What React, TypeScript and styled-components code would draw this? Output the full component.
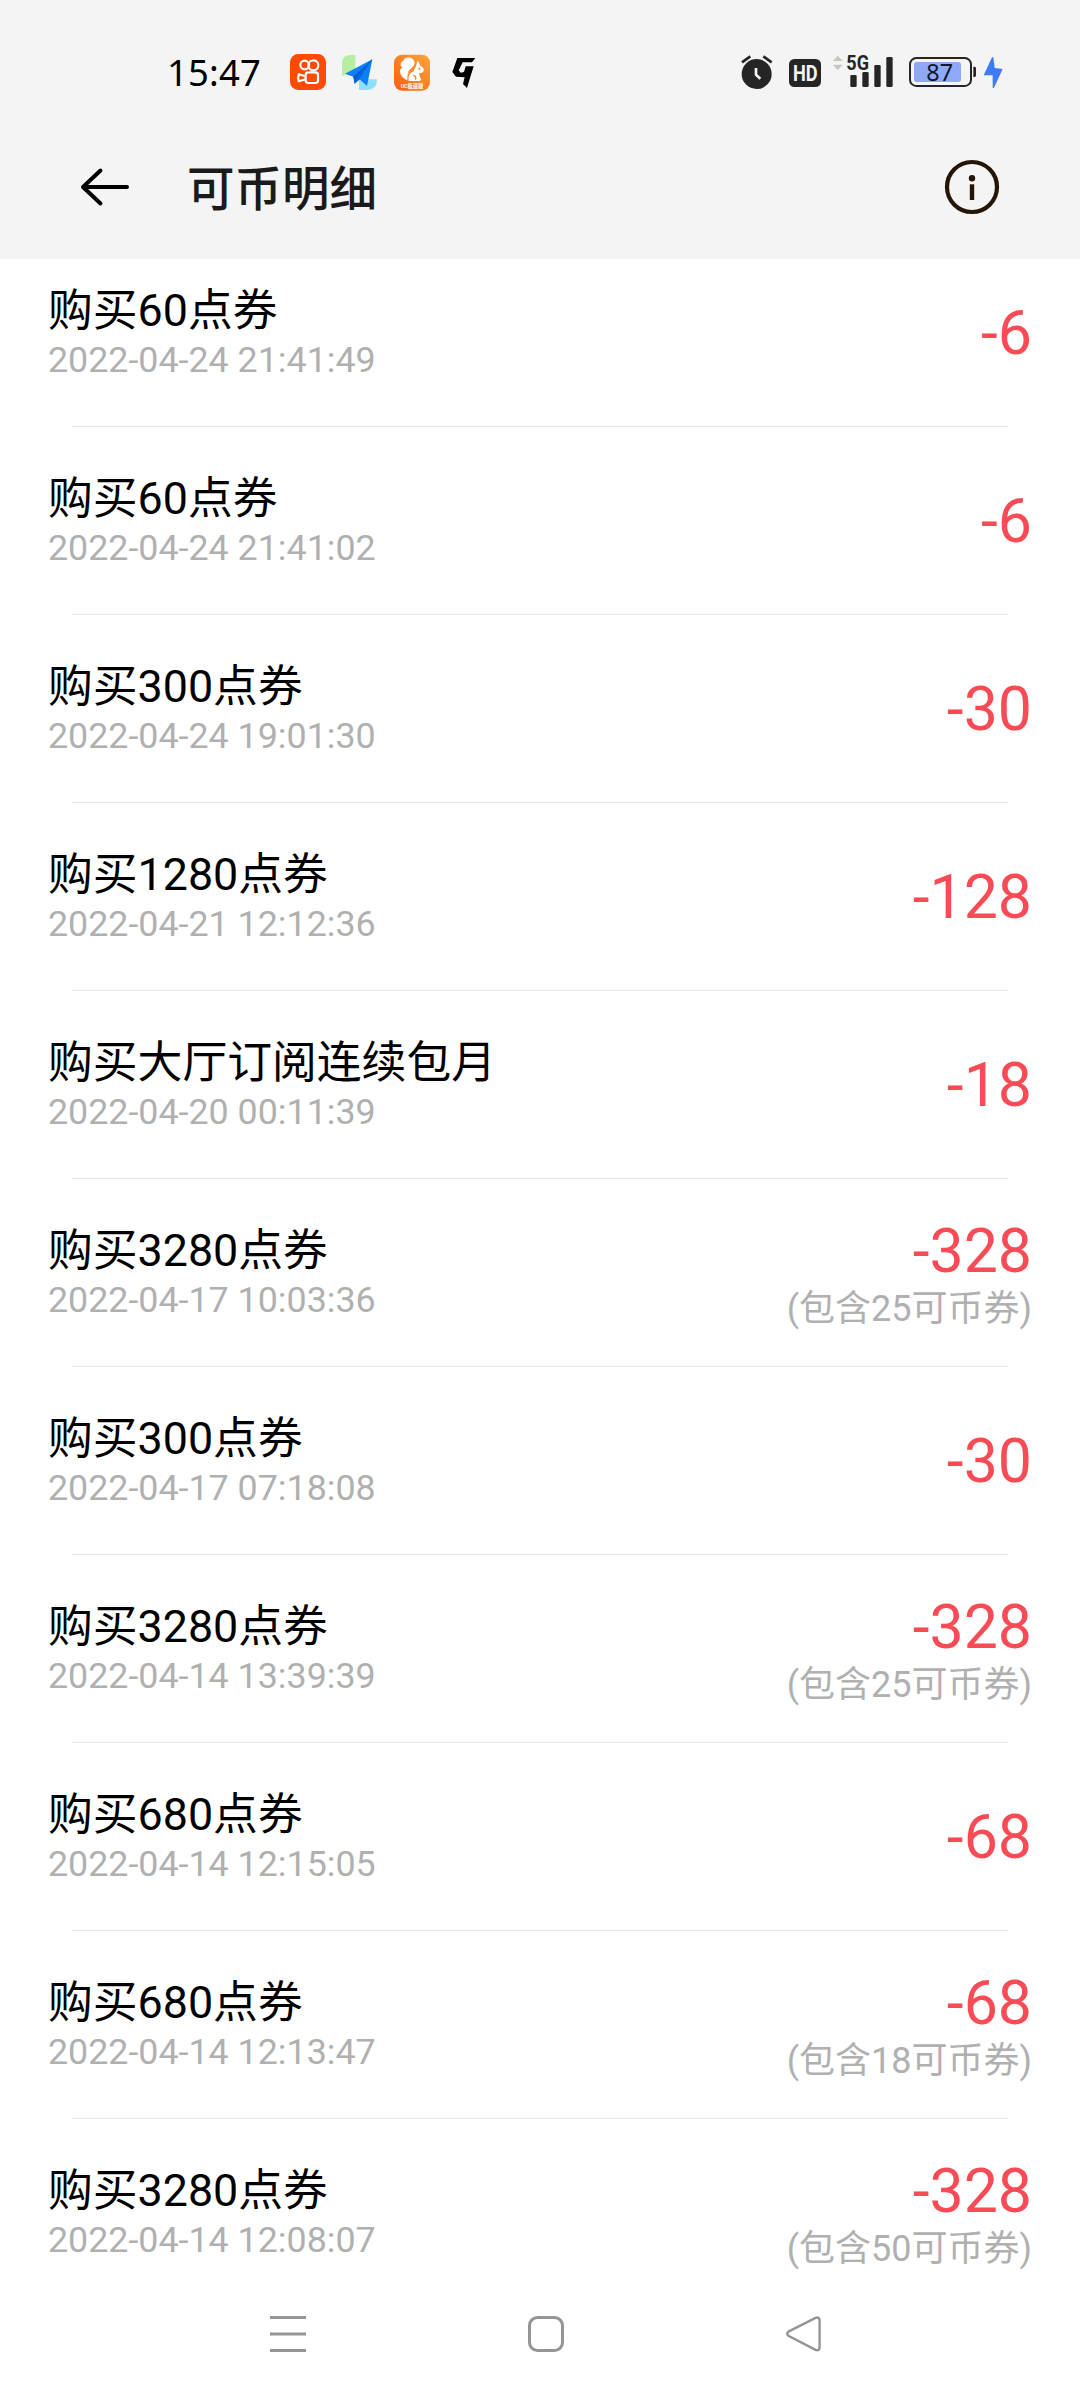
import React from 'react';
import styled, { createGlobalStyle } from 'styled-components';

const GlobalStyle = createGlobalStyle`
  * { box-sizing: border-box; }
  body { margin: 0; background: #ffffff; }
`;

const Screen = styled.div`
  width: 1080px;
  height: 2400px;
  display: flex;
  flex-direction: column;
  overflow: hidden;
  background: #ffffff;
  font-family: Roboto, 'Noto Sans CJK SC', sans-serif;
`;

const TopArea = styled.header`
  flex: none;
  height: 259px;
  background: #f4f4f4;
`;

const StatusBar = styled.div`
  display: flex;
  justify-content: space-between;
  height: 115px;
  padding: 54px 77px 0 167px;
`;

const StatusGroup = styled.div<{ $gap: number }>`
  display: flex;
  gap: ${(p) => p.$gap}px;
  height: 36px;
`;

const Clock = styled.span`
  width: 107px;
  font-family: 'Noto Sans', sans-serif;
  font-size: 36.4px;
  line-height: 36px;
  letter-spacing: 0.2px;
  color: #000000;
`;

const Glyph = styled.svg`
  display: block;
  flex: none;
  overflow: visible;
`;

const TitleBar = styled.div`
  display: flex;
  align-items: center;
  height: 144px;
  padding: 0 80px 0 79px;
`;

const PageTitle = styled.h1`
  flex: 1;
  margin: 0 0 0 56px;
  padding-bottom: 2px;
  font-family: 'Noto Sans CJK SC', sans-serif;
  font-size: 47.5px;
  font-weight: 500;
  line-height: 60px;
  color: #1a1a1a;
`;

const IconButton = styled.button`
  display: block;
  padding: 0;
  border: 0;
  background: none;
`;

const Records = styled.main`
  flex: none;
  height: 2011px;
  overflow: hidden;
`;

const RecordList = styled.ul`
  margin: -20px 0 0;
  padding: 0;
  list-style: none;
`;

const Record = styled.li`
  display: flex;
  flex-direction: column;
  height: 188px;
`;

const RecordBody = styled.div`
  flex: 1;
  display: flex;
  align-items: center;
  justify-content: space-between;
  padding: 0 48px;
`;

const Divider = styled.div`
  height: 1px;
  margin: 0 72px;
  background: #e6e6e6;
`;

const Info = styled.div`
  display: flex;
  flex-direction: column;
  gap: 1px;
`;

const Name = styled.div`
  font-size: 44.8px;
  line-height: 54px;
  color: #000000;
`;

const Time = styled.time`
  font-size: 35.8px;
  line-height: 42px;
  color: #b0b0b0;
`;

const Sum = styled.div`
  display: flex;
  flex-direction: column;
  align-items: flex-end;
  padding-top: 2px;
`;

const Amount = styled.div`
  font-size: 60.8px;
  line-height: 70px;
  color: #f94b55;
`;

const Note = styled.div`
  padding-top: 1px;
  font-size: 36px;
  line-height: 42px;
  color: #b0b0b0;
`;

const NavBar = styled.nav`
  flex: 1;
  display: flex;
  justify-content: space-between;
  align-items: center;
  padding: 0 258px 2px 270px;
`;

type Entry = { name: string; time: string; amount: string; note?: string };

const entries: Entry[] = [
  { name: '购买60点券', time: '2022-04-24 21:41:49', amount: '-6' },
  { name: '购买60点券', time: '2022-04-24 21:41:02', amount: '-6' },
  { name: '购买300点券', time: '2022-04-24 19:01:30', amount: '-30' },
  { name: '购买1280点券', time: '2022-04-21 12:12:36', amount: '-128' },
  { name: '购买大厅订阅连续包月', time: '2022-04-20 00:11:39', amount: '-18' },
  { name: '购买3280点券', time: '2022-04-17 10:03:36', amount: '-328', note: '(包含25可币券)' },
  { name: '购买300点券', time: '2022-04-17 07:18:08', amount: '-30' },
  { name: '购买3280点券', time: '2022-04-14 13:39:39', amount: '-328', note: '(包含25可币券)' },
  { name: '购买680点券', time: '2022-04-14 12:15:05', amount: '-68' },
  { name: '购买680点券', time: '2022-04-14 12:13:47', amount: '-68', note: '(包含18可币券)' },
  { name: '购买3280点券', time: '2022-04-14 12:08:07', amount: '-328', note: '(包含50可币券)' },
];

const VideoAppIcon = () => (
  <Glyph width="36" height="36" viewBox="0 0 108 108">
    <rect width="108" height="108" rx="25" fill="#ff4906" />
    <g fill="none" stroke="#fff" strokeWidth="6.5" strokeLinejoin="round">
      <circle cx="44" cy="33" r="13" />
      <circle cx="70" cy="34" r="15" />
      <rect x="47" y="55" width="37" height="32" rx="8" />
      <path d="M47 67 L26 61 Q23 71 26 82 L47 76" />
    </g>
  </Glyph>
);

const PlaneAppIcon = () => (
  <Glyph width="36" height="36" viewBox="0 0 108 108">
    <path d="M0 66 V26 Q0 3 26 3 H40 V50 L0 66Z" fill="#b4f0a0" />
    <path d="M51 76 H105 Q105 108 76 108 H51Z" fill="#8de0fc" />
    <path d="M91 16 L9 59 L34 68 L38 89 L53 76 L75 96Z" fill="#0b80f8" />
    <path d="M91 16 L34 68 L38 89Z" fill="#075bd0" />
    <path d="M91 16 L45 70 L38 89 L53 76Z" fill="#0969e4" />
  </Glyph>
);

const SquirrelAppIcon = () => (
  <Glyph width="36" height="37" viewBox="0 0 108 111">
    <defs>
      <linearGradient id="squirrel" x1="0" y1="1" x2="1" y2="0">
        <stop offset="0" stopColor="#fa5d15" />
        <stop offset="1" stopColor="#ffa535" />
      </linearGradient>
    </defs>
    <rect y="2" width="108" height="108" rx="25" fill="url(#squirrel)" />
    <path
      d="M45 80 C27 75 18 63 18 51 C18 44 22 42 27 42 C17 37 18 25 28 20 C32 9 49 7 57 16 C66 25 61 36 52 43 C42 50 37 60 45 80Z"
      fill="#fff"
    />
    <path
      d="M70 21 Q78 25 77 34 Q91 41 89 51 Q87 59 75 57 Q77 72 83 78 L75 81 H46 C34 68 41 52 57 48 C64 46 66 38 70 21Z"
      fill="#fff"
    />
    <path d="M42 78 C39 63 48 52 60 49 M64 77 Q69 67 58 64" fill="none" stroke="#fb7a22" strokeWidth="4" />
    <circle cx="76" cy="44" r="3" fill="#fb7a22" />
    <text x="20" y="101" fontFamily="Roboto, 'Noto Sans CJK SC', sans-serif" fontSize="18" fontWeight="700" fill="#fff" textLength="68" lengthAdjust="spacingAndGlyphs">
      UC极速版
    </text>
  </Glyph>
);

const BlockAppIcon = () => (
  <Glyph width="30" height="36" viewBox="-18 0 90 108">
    <path d="M16 12 H70 L60 25 H32 L20 49 L26 56 L36 54 L41 37 H65 L54 72 L45 102 L33 90 L38 70 L12 68 L1 54Z" fill="#000" />
  </Glyph>
);

const AlarmIcon = () => (
  <Glyph width="48" height="36" viewBox="0 0 144 108">
    <circle cx="47" cy="60" r="45" fill="#252525" />
    <path d="M3 25 L28 7 M92 25 L67 7" stroke="#252525" strokeWidth="8" />
    <path d="M45 42 V62 L58 74" fill="none" stroke="#f4f4f4" strokeWidth="8" />
  </Glyph>
);

const HdIcon = () => (
  <Glyph width="44" height="36" viewBox="0 0 132 108">
    <rect y="15" width="96" height="84" rx="16" fill="#252525" />
    <text x="12" y="81" fontFamily="Roboto, sans-serif" fontSize="66" fontWeight="700" fill="#f4f4f4" textLength="74" lengthAdjust="spacingAndGlyphs">
      HD
    </text>
  </Glyph>
);

const SignalIcon = () => (
  <Glyph width="76" height="36" viewBox="0 0 228 108">
    <path d="M0 21 L14 5 L30 21Z M0 32 L14 48 L30 32Z" fill="#c6c6c6" />
    <text x="40" y="49" fontFamily="Roboto, sans-serif" fontSize="61" fontWeight="700" fill="#252525" textLength="68" lengthAdjust="spacingAndGlyphs">
      5G
    </text>
    <g fill="#252525">
      <rect x="52" y="63" width="19" height="36" rx="4" />
      <rect x="88" y="54" width="19" height="45" rx="4" />
      <rect x="124" y="33" width="19" height="66" rx="4" />
      <rect x="160" y="9" width="19" height="90" rx="4" />
    </g>
  </Glyph>
);

const BatteryIcon = () => (
  <Glyph width="74" height="36" viewBox="0 0 222 108">
    <rect x="3" y="12" width="183" height="84" rx="19" fill="none" stroke="#252525" strokeWidth="6" />
    <rect x="15" y="24" width="141" height="60" rx="8" fill="#8fa9f8" />
    <path d="M193 38 H197 Q201 38 201 43 V64 Q201 69 197 69 H193Z" fill="#252525" />
    <text x="52" y="81" fontFamily="'Noto Sans', sans-serif" fontSize="70" fill="#0d1730">
      87
    </text>
  </Glyph>
);

const ChargeIcon = () => (
  <Glyph width="20" height="36" viewBox="0 0 60 108">
    <path d="M27 10 L2 64 H29 L29 102 L33 101 L59 45 L35 42 L31 10Z" fill="#3d7bf7" />
  </Glyph>
);

const BackArrow = () => (
  <Glyph width="52" height="44" viewBox="0 0 52 44">
    <path d="M21.5 5.5 L4 22 L21.5 38.5 M4 22 H48" fill="none" stroke="#000" strokeWidth="4" strokeLinecap="round" strokeLinejoin="round" />
  </Glyph>
);

const InfoIcon = () => (
  <Glyph width="56" height="56" viewBox="0 0 56 56">
    <circle cx="28" cy="28" r="25" fill="none" stroke="#241507" strokeWidth="4.2" />
    <circle cx="28" cy="19.3" r="3.2" fill="#241507" />
    <rect x="25.8" y="25.3" width="4.4" height="15.7" fill="#241507" />
  </Glyph>
);

const RecentsIcon = () => (
  <Glyph width="36" height="36" viewBox="0 0 36 36">
    <path d="M0 1.5 H36 M0 18 H36 M0 34.5 H36" stroke="#959595" strokeWidth="3" />
  </Glyph>
);

const HomeIcon = () => (
  <Glyph width="36" height="36" viewBox="0 0 36 36">
    <rect x="1.5" y="1.5" width="33" height="33" rx="8" fill="none" stroke="#959595" strokeWidth="3" />
  </Glyph>
);

const BackIcon = () => (
  <Glyph width="36" height="36" viewBox="0 0 36 36">
    <path d="M2.4 15.6 L29.5 1.9 Q33.3 0.6 33.6 4.4 V31.4 Q33.3 35.2 29.5 33.9 L2.4 19.8 Q0 17.7 2.4 15.6Z" fill="none" stroke="#959595" strokeWidth="2.4" />
  </Glyph>
);

export default function App() {
  return (
    <Screen>
      <GlobalStyle />
      <TopArea>
        <StatusBar>
          <StatusGroup $gap={16}>
            <Clock>15:47</Clock>
            <VideoAppIcon />
            <PlaneAppIcon />
            <SquirrelAppIcon />
            <BlockAppIcon />
          </StatusGroup>
          <StatusGroup $gap={0}>
            <AlarmIcon />
            <HdIcon />
            <SignalIcon />
            <BatteryIcon />
            <ChargeIcon />
          </StatusGroup>
        </StatusBar>
        <TitleBar>
          <IconButton aria-label="返回">
            <BackArrow />
          </IconButton>
          <PageTitle>可币明细</PageTitle>
          <IconButton aria-label="说明">
            <InfoIcon />
          </IconButton>
        </TitleBar>
      </TopArea>
      <Records>
        <RecordList>
          {entries.map((e) => (
            <Record key={e.time}>
              <RecordBody>
                <Info>
                  <Name>{e.name}</Name>
                  <Time>{e.time}</Time>
                </Info>
                <Sum>
                  <Amount>{e.amount}</Amount>
                  {e.note && <Note>{e.note}</Note>}
                </Sum>
              </RecordBody>
              <Divider />
            </Record>
          ))}
        </RecordList>
      </Records>
      <NavBar>
        <RecentsIcon />
        <HomeIcon />
        <BackIcon />
      </NavBar>
    </Screen>
  );
}
